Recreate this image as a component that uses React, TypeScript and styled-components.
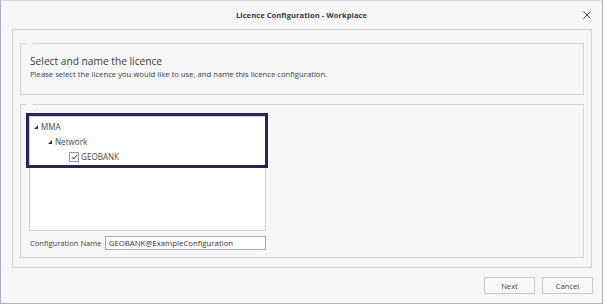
import React from "react";
import styled, { createGlobalStyle } from "styled-components";

const Global = createGlobalStyle`
  html, body { margin: 0; padding: 0; background: #ffffff; }
  body { font-family: "Open Sans", "Noto Sans", sans-serif; }
  * { box-sizing: border-box; }
`;

const Window = styled.div`
  width: 603px;
  height: 304px;
  border: 1px solid #b3abcf;
  border-top-color: #d8d4e6;
  background: #f7f7f7;
  display: flex;
  flex-direction: column;
`;

const TitleBar = styled.div`
  height: 27px;
  display: grid;
  grid-template-columns: 1fr auto 1fr;
  align-items: center;
`;

const Title = styled.div`
  grid-column: 2;
  font-size: 7.6px;
  font-weight: 700;
  color: #3a3a3a;
  letter-spacing: 0.05px;
`;

const CloseButton = styled.div`
  grid-column: 3;
  justify-self: end;
  margin-right: 11px;
  width: 9px;
  height: 9px;
  display: flex;
  align-items: center;
  justify-content: center;
`;

const Outer = styled.div`
  margin: 1px 10px 0 11px;
  height: 239px;
  border: 1px solid #d2d2d2;
  padding: 13px 7px 9px 7px;
  display: flex;
  flex-direction: column;
  gap: 9px;
`;

const Group = styled.fieldset<{ $h: number }>`
  margin: 0;
  height: ${(p) => p.$h}px;
  border: 1px solid #d2d2d2;
  padding: 0;
  min-width: 0;
`;

const Legend = styled.legend`
  margin-left: 5px;
  padding: 0 3.5px;
  height: 0;
  font-size: 0;
  line-height: 0;
`;

const Intro = styled.div`
  padding: 11px 0 0 9px;
`;

const Heading = styled.div`
  font-size: 10.2px;
  color: #3c3c3c;
  line-height: 13px;
`;

const Sub = styled.div`
  font-size: 7.7px;
  color: #3c3c3c;
  line-height: 13px;
`;

const Body = styled.div`
  padding: 11px 0 0 8px;
  display: flex;
  flex-direction: column;
  gap: 5px;
`;

const ListWrap = styled.div`
  position: relative;
  width: 237px;
  height: 115px;
`;

const List = styled.div`
  width: 100%;
  height: 100%;
  background: #ffffff;
  border: 1px solid #cfcfcf;
  padding: 2px 0 0 4px;
  display: flex;
  flex-direction: column;
`;

const Highlight = styled.div`
  position: absolute;
  left: -3px;
  top: -3px;
  width: 242px;
  height: 55px;
  border: 3.5px solid #2b2160;
`;

const Node = styled.div<{ $level: number }>`
  display: flex;
  align-items: center;
  height: 15px;
  padding-left: ${(p) => p.$level * 14}px;
  font-size: 8.1px;
  color: #4a4a4a;
`;

const Arrow = styled.svg`
  width: 4px;
  height: 4px;
  margin: 1px 3px 0 0;
  flex: none;
`;

const Check = styled.div`
  width: 10px;
  height: 10px;
  border: 1px solid #9a9a9a;
  background: #fff;
  margin: 0 2px 0 7px;
  display: flex;
  align-items: center;
  justify-content: center;
  flex: none;
`;

const FieldRow = styled.div`
  display: flex;
  align-items: center;
  gap: 3px;
  padding-left: 1px;
`;

const Label = styled.span`
  font-size: 7.6px;
  color: #444;
`;

const Input = styled.div`
  width: 161px;
  height: 14px;
  border: 1px solid #a9a6c4;
  background: #fff;
  font-size: 7.8px;
  color: #333;
  padding-left: 3px;
  display: flex;
  align-items: center;
`;

const Footer = styled.div`
  flex: 1;
  display: flex;
  justify-content: flex-end;
  align-items: flex-start;
  gap: 7px;
  padding: 9px 9px 0 0;
`;

const Button = styled.div`
  width: 51px;
  height: 17px;
  border: 1px solid #c9c9c9;
  background: #f9f9f9;
  font-size: 7.6px;
  color: #444;
  display: flex;
  align-items: center;
  justify-content: center;
`;

const Expander = () => (
  <Arrow viewBox="0 0 4 4">
    <polygon points="4,0 4,4 0,4" fill="#333" />
  </Arrow>
);

export default function App() {
  return (
    <>
      <Global />
      <Window>
        <TitleBar>
          <Title>Licence Configuration - Workplace</Title>
          <CloseButton>
            <svg width="8" height="8" viewBox="0 0 8 8">
              <path d="M0.5 0.5 L7.5 7.5 M7.5 0.5 L0.5 7.5" stroke="#444" strokeWidth="1" />
            </svg>
          </CloseButton>
        </TitleBar>
        <Outer>
          <Group $h={52}>
            <Legend />
            <Intro>
              <Heading>Select and name the licence</Heading>
              <Sub>Please select the licence you would like to use, and name this licence configuration.</Sub>
            </Intro>
          </Group>
          <Group $h={154}>
            <Legend />
            <Body>
              <ListWrap>
                <List>
                  <Node $level={0}>
                    <Expander />
                    MMA
                  </Node>
                  <Node $level={1}>
                    <Expander />
                    Network
                  </Node>
                  <Node $level={2}>
                    <Check>
                      <svg width="7" height="6" viewBox="0 0 7 6">
                        <path d="M0.8 3 L2.7 5 L6.3 0.8" stroke="#333" strokeWidth="1" fill="none" />
                      </svg>
                    </Check>
                    GEOBANK
                  </Node>
                </List>
                <Highlight />
              </ListWrap>
              <FieldRow>
                <Label>Configuration Name</Label>
                <Input>GEOBANK@ExampleConfiguration</Input>
              </FieldRow>
            </Body>
          </Group>
        </Outer>
        <Footer>
          <Button>Next</Button>
          <Button>Cancel</Button>
        </Footer>
      </Window>
    </>
  );
}
